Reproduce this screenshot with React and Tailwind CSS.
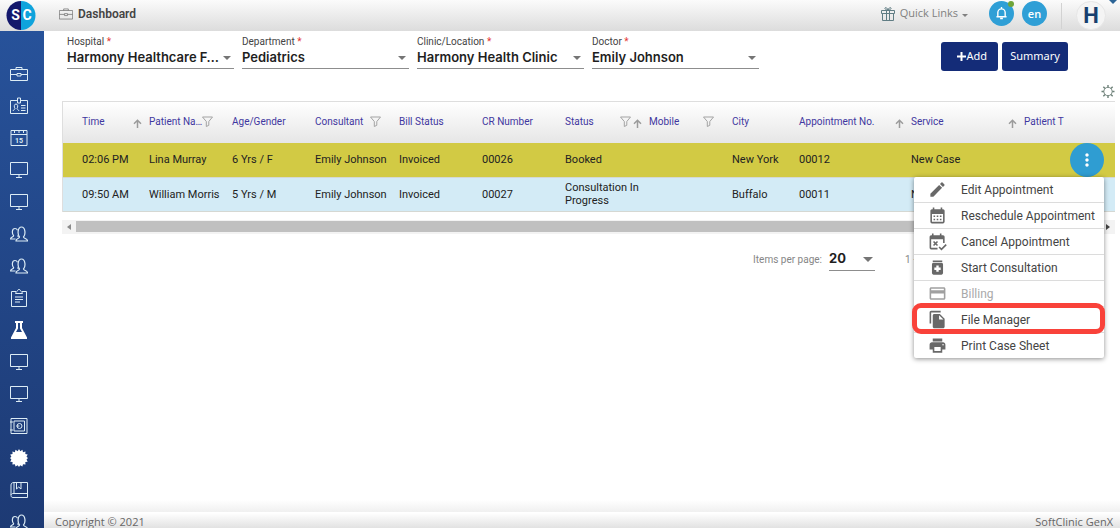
import React from 'react';
import {
  MdCalendarMonth,
  MdCreditCard,
  MdEdit,
  MdFileCopy,
  MdMedication,
  MdMoreVert,
  MdPrint,
} from 'react-icons/md';

const columns = [
  { key: 'time', label: 'Time', width: 'w-[86px]', sort: true },
  { key: 'patient', label: 'Patient Na…', width: 'w-[83px]', filter: true, packed: true },
  { key: 'age', label: 'Age/Gender', width: 'w-[83px]' },
  { key: 'consultant', label: 'Consultant', width: 'w-[84px]', filter: true },
  { key: 'bill', label: 'Bill Status', width: 'w-[83px]' },
  { key: 'cr', label: 'CR Number', width: 'w-[83px]' },
  { key: 'status', label: 'Status', width: 'w-[84px]', filter: true, sort: true },
  { key: 'mobile', label: 'Mobile', width: 'w-[83px]', filter: true },
  { key: 'city', label: 'City', width: 'w-[67px]' },
  { key: 'number', label: 'Appointment No.', width: 'w-[112px]', sort: true },
  { key: 'service', label: 'Service', width: 'w-[113px]', sort: true },
];

const appointments = [
  {
    time: '02:06 PM',
    patient: 'Lina Murray',
    age: '6 Yrs / F',
    consultant: 'Emily Johnson',
    bill: 'Invoiced',
    cr: '00026',
    status: 'Booked',
    mobile: '',
    city: 'New York',
    number: '00012',
    service: 'New Case',
    color: 'bg-[#d2ca44]',
  },
  {
    time: '09:50 AM',
    patient: 'William Morris',
    age: '5 Yrs / M',
    consultant: 'Emily Johnson',
    bill: 'Invoiced',
    cr: '00027',
    status: 'Consultation In Progress',
    mobile: '',
    city: 'Buffalo',
    number: '00011',
    service: 'New Case',
    color: 'bg-[#d3ebf6]',
  },
];

const fields = [
  { id: 'hospital', label: 'Hospital', value: 'Harmony Healthcare F…' },
  { id: 'department', label: 'Department', value: 'Pediatrics' },
  { id: 'clinic', label: 'Clinic/Location', value: 'Harmony Health Clinic' },
  { id: 'doctor', label: 'Doctor', value: 'Emily Johnson' },
];

const Line = ({ children, className = 'h-[18px] w-[18px]', width = 1 }) => (
  <svg viewBox="0 0 18 18" fill="none" stroke="currentColor" strokeWidth={width} className={className} aria-hidden="true">
    {children}
  </svg>
);

const BriefcaseIcon = ({ className }) => (
  <Line className={className}>
    <path d="M.5 4.500h17v11H.5zM6 4.500V2.500h6v2M.5 9.500H7M11 9.500h6.500M7 8.500h4v2.500H7z" />
  </Line>
);

const BadgeIcon = () => (
  <Line>
    <path d="M7 3.500H.5v13h17v-13H11M7.500 1h3v5h-3zM3 14c.3-1.500 2-1.200 2-2.500C3.800 10 4 7 6 7s2.200 3 1 4.500c0 1.300 1.700 1 2 2.500M11 8.500h4.500M11 11h4.500M11 13.500h4.500" />
  </Line>
);

const CalendarIcon = () => (
  <Line>
    <path d="M1 1.500h16v15H1zM1 5.500h16M4.500 1v3M9 1v3M13.500 1v3" />
    <text x="9" y="13.500" textAnchor="middle" stroke="none" fill="currentColor" fontSize="7" fontWeight="700" fontFamily="Roboto">15</text>
  </Line>
);

const MonitorIcon = () => (
  <Line>
    <path d="M.5 1.500h17v12H.5zM9 13.500v3M6 16.500h6" />
  </Line>
);

const UsersIcon = () => (
  <Line width={1.2}>
    <path d="M6 16c-.2-2.800 3.500-2.200 3.500-4C7.300 9.500 7.500 2 11.500 2s4.300 7.500 2 10c0 1.800 4.200 1.200 4 4z" />
    <path d="M5.500 14H.6c-.1-2.200 3-1.700 3-3.300C1.800 8.500 1.800 3.500 5 3.500c1.300 0 2 .7 2.500 1.800M7.500 10.500c.1.700.6 1 1.200 1.200" />
  </Line>
);

const ClipboardIcon = () => (
  <Line>
    <path d="M6 2.500H1.500v15h15v-15H12M5.500 4.500c0-2 2-1.500 2-3 .5-1.300 2.500-1.300 3 0 0 1.500 2 1 2 3zM5 8h8M5 10.500h8M5 13h5" />
  </Line>
);

const FlaskIcon = () => (
  <Line>
    <path fill="#fff" stroke="none" d="M5 0h8v2h-1v5l5 9.500V18H1v-1.500L6 7V2H5zM8 2v5.500L6 11h6l-2-3.500V2z" fillRule="evenodd" />
  </Line>
);

const SafeIcon = () => (
  <Line>
    <path d="M1 1.500h16v15H1zM4 4h10.500v10H4zM0 5h3M0 13h3M6.500 9h3" />
    <circle cx="9.500" cy="9" r="2.500" />
  </Line>
);

const BurstIcon = () => (
  <Line>
    <path
      fill="#fff"
      stroke="none"
      d="M9 0l1.300 2.200L12.400.7l.6 2.500 2.500-.6-.2 2.500 2.400.4-1.200 2.200L18 9l-1.500 1.500 1.200 2.200-2.400.4.200 2.500-2.500-.4-.6 2.300-2.200-1.300L9 18l-1.300-1.800-2.200 1.300-.6-2.300-2.500.4.200-2.500-2.400-.4 1.200-2.200L0 9l1.400-1.300L.2 5.500l2.400-.4-.2-2.500 2.500.6.6-2.500 2.200 1.500z"
    />
  </Line>
);

const BookIcon = () => (
  <Line>
    <path d="M4 1.500h13.500v15H3c-1.500 0-2-1-2-2V4c0-1.500 1-2.500 3-2.500zM1 14c.3-1 1-1.500 2-1.500h14.500M4 1.500v11M6.500 2v6l2.200-2L11 8V2" />
  </Line>
);

const sidebarItems = [
  { label: 'Dashboard', icon: BriefcaseIcon },
  { label: 'Registration', icon: BadgeIcon },
  { label: 'Appointments', icon: CalendarIcon },
  { label: 'Front desk', icon: MonitorIcon },
  { label: 'Consultation desk', icon: MonitorIcon },
  { label: 'Patients', icon: UsersIcon },
  { label: 'Staff', icon: UsersIcon },
  { label: 'Records', icon: ClipboardIcon },
  { label: 'Laboratory', icon: FlaskIcon },
  { label: 'Radiology', icon: MonitorIcon },
  { label: 'Nursing', icon: MonitorIcon },
  { label: 'Accounts', icon: SafeIcon },
  { label: 'Settings', icon: BurstIcon },
  { label: 'Library', icon: BookIcon },
  { label: 'Groups', icon: UsersIcon },
];

const CancelCalendarIcon = ({ className }) => (
  <svg viewBox="0 0 24 24" className={className} aria-hidden="true">
    <path fill="currentColor" d="M5 2h2v2h8V2h2v2h2a2 2 0 0 1 2 2v8h-2V9H4v11h8v2H4a2 2 0 0 1-2-2V6a2 2 0 0 1 2-2h1z" />
    <path fill="none" stroke="currentColor" strokeWidth="2" d="M7 12l5 5M12 12l-5 5M14 19l3 3 6-6" />
  </svg>
);

const menuItems = [
  { label: 'Edit Appointment', icon: MdEdit },
  { label: 'Reschedule Appointment', icon: MdCalendarMonth },
  { label: 'Cancel Appointment', icon: CancelCalendarIcon },
  { label: 'Start Consultation', icon: MdMedication },
  { label: 'Billing', icon: MdCreditCard, disabled: true },
  { label: 'File Manager', icon: MdFileCopy, highlighted: true },
  { label: 'Print Case Sheet', icon: MdPrint },
];

const FilterIcon = () => (
  <svg viewBox="0 0 11 11" className="h-[11px] w-[11px] shrink-0 text-[#a3a3a3]" fill="none" stroke="currentColor" aria-hidden="true">
    <path d="M.5 1h10L6.800 5.500v3.800L4.300 10.500v-5z" />
  </svg>
);

const SortIcon = () => (
  <svg viewBox="0 0 9 9" className="mt-1 h-[9px] w-[9px] shrink-0 text-[#9b9b9b]" fill="none" stroke="currentColor" strokeWidth="1.500" aria-hidden="true">
    <path d="M4.500 9V1M1 4.700L4.500 1.200 8 4.700" />
  </svg>
);

const Caret = ({ className = '' }) => (
  <svg viewBox="0 0 10 5" className={`pointer-events-none ${className}`} aria-hidden="true">
    <path fill="currentColor" d="M0 0h10L5 5z" />
  </svg>
);

const Header = () => (
  <header className="flex h-[31px] shrink-0 items-center bg-linear-to-b from-[#fbfbfb] to-[#dcdcdc] pr-[14px]">
    <svg viewBox="0 0 30 30" className="ml-[6px] h-[30px] w-[30px]" role="img" aria-label="SoftClinic">
      <path d="M15 0a14.500 14.500 0 0 0 0 29z" fill="#14186c" />
      <path d="M15 0a14.500 14.500 0 0 1 0 29z" fill="#0fa3dc" />
      <text x="9.500" y="19" textAnchor="middle" fill="#fff" fontSize="14" fontWeight="700" fontFamily="Roboto">S</text>
      <text x="21" y="19" textAnchor="middle" fill="#fff" fontSize="14" fontWeight="700" fontFamily="Roboto">C</text>
    </svg>
    <BriefcaseIcon className="mb-1 ml-[23px] h-[14px] w-[14px] text-[#777]" />
    <h1 className="ml-[5px] mb-1 text-xs font-semibold text-[#444]">Dashboard</h1>

    <button type="button" className="mb-1 ml-auto flex items-center text-[#808080]">
      <svg viewBox="0 0 14 14" className="h-[14px] w-[14px]" fill="none" stroke="#607d84" aria-hidden="true">
        <path d="M.5 3.500h13v3H.5zM1.500 6.500v7h11v-7M5.500 3.500v10M8.500 3.500v10M7 3C5 3 3.500 2 4 1s2.500 0 3 2c.5-2 2.500-3 3-2s-1 2-3 2z" />
      </svg>
      <span className="ml-[5px] font-['Open_Sans',sans-serif] text-[11px]">Quick Links</span>
      <Caret className="mt-1 ml-1 h-[3px] w-[6px]" />
    </button>
    <button type="button" aria-label="Notifications" className="relative ml-[21px] mb-1 flex h-[25px] w-[25px] items-center justify-center rounded-full bg-[#2f9fd6] text-white">
      <svg viewBox="0 0 12 14" className="h-[13px] w-[11px]" fill="none" stroke="currentColor" strokeWidth="1.500" aria-hidden="true">
        <path d="M.5 10.500h11M2 10.500V6a4 4 0 0 1 8 0v4.500M6 0v2M4.500 12.500h3" />
      </svg>
      <span className="absolute top-0 right-0 h-[6px] w-[6px] rounded-full bg-[#6fa43a]"></span>
    </button>
    <button type="button" className="ml-2 mb-1 h-[25px] w-[25px] rounded-full bg-[#2f9fd6] font-['Open_Sans',sans-serif] text-[11px] font-semibold leading-none text-white">
      en
    </button>
    <span className="ml-[14px] h-[26px] w-px bg-[#d2d2d2]"></span>
    <button type="button" className="ml-[14px] flex h-[29px] w-[30px] items-center justify-center rounded-full border border-[#e6e6e6] bg-[#f4f4f4] text-[22px] font-bold leading-none text-[#173f6e]">
      H
    </button>
    <svg viewBox="0 0 8 4" className="absolute top-0 right-[3px] h-1 w-2" aria-hidden="true">
      <path fill="#2c6496" d="M0 0h8L4 4z" />
    </svg>
  </header>
);

const Sidebar = () => (
  <nav className="flex w-11 shrink-0 flex-col overflow-hidden bg-linear-to-b from-[#27529a] to-[#1d3a74] pt-[27px]">
    {sidebarItems.map(({ label, icon: Icon }) => (
      <a key={label} href="#" aria-label={label} className="flex h-8 shrink-0 items-center justify-center pr-[6px] text-[#dcecf5]">
        <Icon />
      </a>
    ))}
  </nav>
);

const SelectField = ({ id, label, value }) => (
  <div className="flex w-[167px] flex-col">
    <label htmlFor={id} className="text-[10px] leading-3 text-[#444]">
      {label} <span className="text-[#e53935]">*</span>
    </label>
    <div className="relative flex items-center border-b border-[#8d8d8d]">
      <select id={id} className="h-5 w-full appearance-none bg-transparent pb-px font-['Inter',sans-serif] text-[13px] font-semibold text-[#1f1f1f]">
        <option>{value}</option>
      </select>
      <Caret className="absolute right-[3px] h-1 w-2 text-[#757575]" />
    </div>
  </div>
);

const Toolbar = () => (
  <div className="flex items-start pr-[47px] pl-[5px]">
    <div className="flex gap-2 pt-[5px]">
      {fields.map((field) => (
        <SelectField key={field.id} {...field} />
      ))}
    </div>
    <div className="ml-auto flex gap-1 pt-[11px] font-['Noto_Sans',sans-serif] text-[11px] text-white">
      <button type="button" className="flex h-[29px] w-[57px] items-center justify-end rounded-[3px] bg-[#142c78] pr-[11px]">
        <svg viewBox="0 0 9 9" className="h-[9px] w-[9px]" aria-hidden="true">
          <path d="M4.500 0v9M0 4.500h9" stroke="currentColor" strokeWidth="2" />
        </svg>
        Add
      </button>
      <button type="button" className="h-[29px] w-[66px] rounded-[3px] bg-[#142c78]">
        Summary
      </button>
    </div>
  </div>
);

const AppointmentTable = () => (
  <div className="overflow-hidden border-t border-l border-[#dedede]">
    <table className="w-full table-fixed text-left text-[11px] leading-[13px] text-[#222]">
      <thead>
        <tr className="h-[41px] bg-linear-to-b from-white to-[#e6e6e6] text-[10px] text-[#3f37a0]">
          {columns.map(({ key, label, width, filter, sort, packed }) => (
            <th key={key} className={`${width} p-0 font-normal first:pl-[19px]`}>
              <div className="flex items-center whitespace-nowrap pr-[7px] pb-[2px]">
                <span className={packed ? '' : 'mr-auto'}>{label}</span>
                {filter && <FilterIcon />}
                <span className="ml-[2px] w-[9px] shrink-0">{sort && <SortIcon />}</span>
              </div>
            </th>
          ))}
          <th className="p-0 pb-[2px] font-normal">Patient T</th>
        </tr>
      </thead>
      <tbody>
        {appointments.map((row) => (
          <tr key={row.number} className={`h-[34px] border-b border-[#d5d8d3] ${row.color}`}>
            {columns.map(({ key }) => (
              <td key={key} className="p-0 first:pl-[19px]">
                <div className={key === 'status' ? 'w-20' : 'whitespace-nowrap'}>{row[key]}</div>
              </td>
            ))}
            <td></td>
          </tr>
        ))}
      </tbody>
    </table>
  </div>
);

const ActionMenu = () => (
  <div className="absolute top-[42px] right-[11px] z-10 flex flex-col items-end">
    <button type="button" aria-label="Row actions" className="flex h-[34px] w-[34px] items-center justify-center rounded-full bg-[#2f9dd2] text-white">
      <MdMoreVert className="h-5 w-5" />
    </button>
    <ul className="w-[190px] rounded-[2px] bg-white shadow-[0_1px_5px_rgba(0,0,0,0.45)]">
      {menuItems.map(({ label, icon: Icon, disabled, highlighted }) => (
        <li key={label} className="relative border-b border-[#dcdcdc] last:border-b-0">
          <button
            type="button"
            disabled={disabled}
            className={`flex h-[25px] w-full items-center pl-[14px] text-xs whitespace-nowrap ${disabled ? 'text-[#a9a9a9]' : 'text-[#444]'}`}
          >
            <Icon className={`h-[19px] w-[19px] ${disabled ? 'text-[#a0a0a0]' : 'text-[#686868]'}`} />
            <span className="ml-[14px]">{label}</span>
          </button>
          {highlighted && (
            <span className="pointer-events-none absolute -top-1 -right-px -bottom-[2px] -left-[2px] z-10 rounded-[9px] border-[5px] border-[#f9423a]"></span>
          )}
        </li>
      ))}
    </ul>
  </div>
);

const ScrollBar = () => (
  <div className="mt-2 flex h-[14px] items-center bg-[#f3f3f3] px-[5px]" aria-hidden="true">
    <svg viewBox="0 0 4 6" className="h-[6px] w-1">
      <path fill="#8b8b8b" d="M4 0v6L0 3z" />
    </svg>
    <span className="mx-[5px] h-[11px] flex-1 bg-[#c0c0c0]"></span>
    <svg viewBox="0 0 4 6" className="h-[6px] w-1">
      <path fill="#444" d="M0 0v6l4-3z" />
    </svg>
  </div>
);

const Paginator = () => (
  <div className="flex items-center justify-end pt-[15px] text-[10px] text-[#868686]">
    <label htmlFor="page-size">Items per page:</label>
    <div className="relative ml-[7px] flex w-[46px] items-center border-b border-[#8d8d8d]">
      <select id="page-size" className="h-[21px] w-full appearance-none bg-transparent font-['Inter',sans-serif] text-[13px] font-bold text-[#1f1f1f]">
        <option>20</option>
      </select>
      <Caret className="absolute right-[2px] h-[5px] w-[10px] text-[#757575]" />
    </div>
    <span className="ml-[30px] w-[210px]">1 – 2 of 2</span>
  </div>
);

const Footer = () => (
  <footer className="shrink-0">
    <div className="h-3 bg-linear-to-b from-white to-[#f0f0f0]"></div>
    <div className="mt-px flex h-[15px] justify-between overflow-hidden bg-linear-to-b from-white to-[#e2e2e2] pr-[7px] pl-[11px] font-['Open_Sans',sans-serif] text-[11px] leading-[18px] text-[#666]">
      <span>Copyright © 2021</span>
      <span>SoftClinic GenX</span>
    </div>
  </footer>
);

const App = () => {
  return (
    <div className="relative flex h-screen flex-col overflow-hidden bg-white font-['Roboto',sans-serif]">
      <Header />
      <div className="flex min-h-0 flex-1">
        <Sidebar />
        <div className="flex min-w-0 flex-1 flex-col">
          <main className="min-h-0 flex-1 pr-[5px] pl-[18px]">
            <Toolbar />
            <div className="flex justify-end pt-[14px] pb-[3px]">
              <button type="button" aria-label="Table settings" className="text-[#6d8078]">
                <svg viewBox="0 0 14 14" className="h-[13px] w-[14px]" fill="none" stroke="currentColor" aria-hidden="true">
                  <circle cx="7" cy="7" r="4.500" />
                  <path strokeWidth="1.500" d="M7 0v2.500M7 11.500V14M0 7h2.500M11.500 7H14M2 2l1.800 1.800M10.200 10.200L12 12M12 2l-1.800 1.800M3.800 10.200L2 12" />
                </svg>
              </button>
            </div>
            <div className="relative">
              <AppointmentTable />
              <ActionMenu />
              <ScrollBar />
            </div>
            <Paginator />
          </main>
          <Footer />
        </div>
      </div>
    </div>
  );
};

export default App;
